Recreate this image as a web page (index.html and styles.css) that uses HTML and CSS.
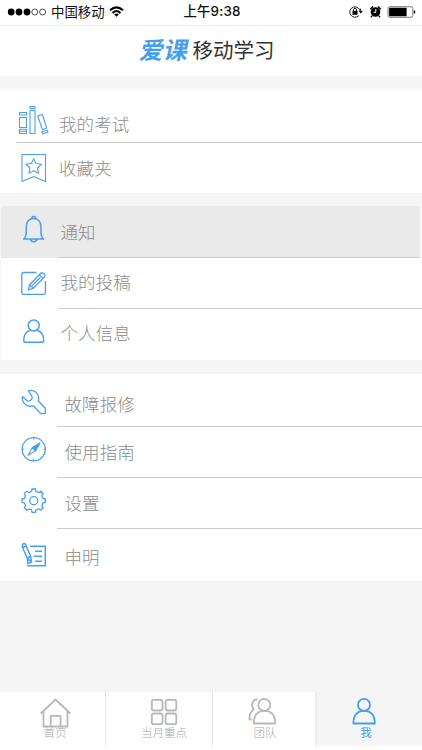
FILE: index.html
```html
<!DOCTYPE html>
<html lang="zh-CN">
<head>
<meta charset="utf-8">
<title>爱课移动学习</title>
<link rel="stylesheet" href="styles.css">
</head>
<body>
<header class="status">
  <div class="carrier">
    <svg width="40" height="24" viewBox="0 0 40 24"><g fill="#000"><circle cx="4.2" cy="12" r="3.4"/><circle cx="12" cy="12" r="3.4"/><circle cx="20" cy="12" r="3.4"/></g><g fill="none" stroke="#222" stroke-width=".8"><circle cx="27.8" cy="12" r="3"/><circle cx="35.6" cy="12" r="3"/></g></svg>
    <span>中国移动</span>
    <svg class="wifi" width="15" height="24" viewBox="0 0 15 24"><g fill="none" stroke="#000" stroke-width="2"><path d="M1 10.2Q7.5 4.6 14 10.2"/><path d="M3.5 12.9Q7.5 9.2 11.500 12.900"/></g><path d="M5.200 14.500Q7.500 12.700 9.800 14.500L7.500 16.700Z"/></svg>
  </div>
  <div class="clock">上午9:38</div>
  <svg class="indicators" width="68" height="24" viewBox="0 0 68 24"><path d="M11.200 12A5.200 5.200 0 1 0 9.800 15.600M11.200 8.500A5.300 5.300 0 0 1 11.500 13" fill="none" stroke="#222" stroke-width="1"/><path d="M9.800 11h4l-2 2.600z"/><rect x="3.500" y="10.800" width="5" height="4"/><path d="M4.500 11V9.800a1.500 1.500 0 0 1 3 0V11" fill="none" stroke="#000" stroke-width=".9"/><circle cx="26.500" cy="12" r="4.800"/><path d="M21.300 9.300l2.700-2.800M31.700 9.300l-2.700-2.800M23 16l-1 1.300M30 16l1 1.300" stroke="#000" stroke-width="1.500"/><path d="M26.800 9v3.300h-2.300" fill="none" stroke="#fff" stroke-width="1"/><rect x="39" y="6.700" width="24.800" height="10.600" rx="1.800" fill="#fff" stroke="#555" stroke-width=".8"/><rect x="40.100" y="7.800" width="17.500" height="8.400" rx=".5"/><path d="M64.800 10q1.600.5 1.600 2t-1.600 2z"/></svg>
</header>
<div class="title"><span class="logo">爱课</span><span class="name">移动学习</span></div>

<main>
  <section class="group exams">
    <a class="row r-exam line-wide"><svg class="icon" viewBox="0 0 32 50"><path d="M1.500 22.500h7V25h-7zM1.500 27.500h7v10h-7zM1.500 39.200h7v4.300h-7zM1.500 41.300h7M12 16.500h5v2h-5zM12 20.500h5v23h-5zM19.700 26l4.600-1.500L28.700 38l-4.200 1.800zM23.800 41.700l5.500-1.400.7 2-5.400 1.400z"/></svg><span class="label">我的考试</span></a>
    <a class="row r-fav"><svg class="icon" viewBox="0 0 32 50"><path d="M4 11.500h23.500v27l-11.800-5L4 38.500z"/><path d="M15.700 15.700l2.400 4.800 5.300.8-3.900 3.700.9 5.200-4.700-2.400-4.700 2.400.9-5.200L8 21.300l5.300-.8z"/></svg><span class="label">收藏夹</span></a>
  </section>

  <section class="group personal">
    <a class="row r-notice active line"><svg class="icon" viewBox="0 0 32 50"><path class="heavy" d="M5.600 33c2.300-1.800 2.700-3.200 2.700-7.500v-5.200c0-4.800 3.200-7.800 7.300-7.800s7.300 3 7.300 7.800v5.200c0 4.300.4 5.700 2.700 7.500zM13.700 12.400c0-2.500 4-2.500 4 0M12.500 33.300c.2 3.300 6.200 3.300 6.400 0"/></svg><span class="label">通知</span></a>
    <a class="row r-post line"><svg class="icon" viewBox="0 0 32 50"><path class="bold" d="M18.500 14.500H5.500Q3.800 14.500 3.800 16.200v18.500q0 1.700 1.700 1.700h20.200q1.700 0 1.700-1.700V23"/><path class="bold" d="M10.300 32l1.300-5.200L22.800 15.200q1.100-1 2.400.1l1.400 1.300q1.100 1.100 0 2.300L15.300 30.300zM11.600 26.800l3.700 3.500M21.300 16.800l3.700 3.600M14 27.900l8.300-8.400"/></svg><span class="label">我的投稿</span></a>
    <a class="row r-info"><svg class="icon" viewBox="0 0 32 50"><circle class="heavy" cx="15.700" cy="16.500" r="5.500"/><path class="heavy" d="M12.200 21.200C8 22.600 5.800 26 5.800 30.800v1.300q0 1.200 1.200 1.200h17.400q1.200 0 1.200-1.200v-1.300c0-4.800-2.200-8.200-6.400-9.600"/></svg><span class="label">个人信息</span></a>
  </section>

  <section class="group support">
    <a class="row r-repair line"><svg class="icon" viewBox="0 0 32 50"><path class="bold" d="M10.300 16.800q4.600-1.300 8 1.800 3.500 3.500 1.800 8.200l7.200 7.500V39.600h-4.500L15.300 31.800q-4.500 1.300-8-1.400Q3.500 27.200 4.400 22.600l4.800 4.100q1.700.9 3.400-.5 2-1.600 1.500-3.700z"/></svg><span class="label">故障报修</span></a>
    <a class="row r-guide line"><svg class="icon" viewBox="0 0 32 50"><circle class="bold" cx="15.700" cy="22.300" r="11.600"/><path d="M21.800 16.200l-4.500 7.700-7.300 4.300 4.200-7.400z"/><path class="solid" d="M21.800 16.200l-4.500 7.700-3.100-3.100z"/><path d="M15.700 10.700v1.800M15.700 32v1.800M4.200 22.300H6M25.500 22.300h1.800"/></svg><span class="label">使用指南</span></a>
    <a class="row r-settings line"><svg class="icon" viewBox="0 0 32 50"><defs><path id="tooth" d="M-2.200-9.200l.5-2.500h3.400l.5 2.500 2.900 1.140"/></defs><g class="bold" transform="translate(15.700 22.700)"><circle r="4"/><use href="#tooth"/><use href="#tooth" transform="rotate(45)"/><use href="#tooth" transform="rotate(90)"/><use href="#tooth" transform="rotate(135)"/><use href="#tooth" transform="rotate(180)"/><use href="#tooth" transform="rotate(225)"/><use href="#tooth" transform="rotate(270)"/><use href="#tooth" transform="rotate(315)"/></g></svg><span class="label">设置</span></a>
    <a class="row r-terms"><svg class="icon" viewBox="0 0 32 50"><path class="heavy" d="M12.300 17.300h15v19.400H9M17 22.300h7M15.500 27.300H24M17 32.300h7"/><path class="heavy" d="M4.500 18.500l3.700-1.500 4.500 10.500-3.500 1.500zM4.500 18.500q-.8-3 1-3.800t2.700 2.300M9.200 29l3.500-1.500.9 5.600zM9.500 29.500l.2 5 4-1.400"/></svg><span class="label">申明</span></a>
  </section>
</main>

<nav class="tabs">
  <a class="tab t-home"><svg viewBox="0 0 105 54"><path d="M40.700 21.500L55.500 7.500l14.800 14M43.500 19.500v15h24v-15M50.700 34.500v-10.700h9.800v10.700"/></svg><span>首页</span></a>
  <a class="tab t-month"><svg viewBox="106 0 106 54"><rect x="151.800" y="7.800" width="10.700" height="10.700" rx="2"/><rect x="165.600" y="7.800" width="10.700" height="10.700" rx="2"/><rect x="151.800" y="21.500" width="10.700" height="10.700" rx="2"/><rect x="165.600" y="21.500" width="10.700" height="10.700" rx="2"/></svg><span>当月重点</span></a>
  <a class="tab t-team"><svg viewBox="213 0 102 54"><circle cx="264.300" cy="12.900" r="6"/><path d="M253.800 31.500q0-12.600 10.700-12.600t10.700 12.600zM257.600 7.300c-6 0-6.600 7-3.800 10.200-3 1.800-4.400 4.700-4.400 9.800l2.300.3"/></svg><span>团队</span></a>
  <a class="tab t-me current"><svg viewBox="317 0 105 54"><circle cx="364" cy="12.900" r="6"/><path d="M353.400 31.500q0-12.600 10.700-12.600t10.700 12.600z"/></svg><span>我</span></a>
</nav>
</body>
</html>
```
FILE: styles.css
```css
* { box-sizing: border-box; }
body {
  margin: 0;
  width: 422px;
  height: 750px;
  overflow: hidden;
  display: flex;
  flex-direction: column;
  background: #fff;
  font-family: "Noto Sans CJK SC", sans-serif;
  color: #8c8c8c;
}
svg { display: block; flex: none; }

.status {
  height: 26px;
  display: grid;
  grid-template-columns: 1fr auto 1fr;
  padding: 0 5px 0 7px;
  border-bottom: 1px solid #ededed;
  color: #111;
  font-size: 13.4px;
  line-height: 23px;
}
.carrier { display: flex; }
.carrier span { margin-left: 4px; }
.wifi { margin-left: 4px; }
.clock {
  font-family: Inter, "Noto Sans CJK SC", sans-serif;
  font-weight: 500;
  font-size: 13.4px;
  letter-spacing: .15px;
}
.indicators { justify-self: end; }

.title {
  height: 50px;
  display: flex;
  justify-content: center;
  align-items: flex-start;
  padding-right: 7px;
  color: #333;
  font-size: 20.5px;
}
.logo {
  color: #459ef0;
  font-weight: 700;
  font-size: 24px;
  line-height: 46px;
  transform: skewX(-12deg);
  margin-right: 4px;
}
.name { line-height: 46px; }

main {
  height: 616px;
  background: #f5f5f5;
  padding-top: 14px;
}
.group { background: #fff; }
.exams { height: 103px; margin-bottom: 13px; }
.personal { height: 154px; margin-bottom: 14px; margin-left: 1px; }
.support { height: 207px; }

.row {
  display: flex;
  align-items: flex-start;
  padding-left: 18px;
  height: 51px;
}
.personal .row { padding-left: 17px; }
.icon {
  width: 32px;
  height: 50px;
  fill: none;
  stroke: #4a9fee;
  stroke-width: 1.1;
  stroke-linejoin: round;
}
.bold { stroke-width: 1.3; }
.heavy { stroke-width: 1.5; }
.solid { fill: #459ef0; }
.label {
  margin-left: 9px;
  font-size: 17.5px;
  font-weight: 300;
  line-height: 20px;
  letter-spacing: .1px;
}
.personal .label { margin-left: 10.5px; }
.support .label { margin-left: 14.5px; }

.line, .line-wide {
  background: linear-gradient(#ccc, #ccc) right bottom / calc(100% - 57px) 1px no-repeat;
}
.line-wide { background-size: calc(100% - 16px) 1px; }
.active {
  background-color: #eaeaea;
  border-right: 2px solid #f8f8f8;
}

.r-exam { height: 53px; }
.r-exam .label { margin-top: 24px; }
.r-fav .label { margin-top: 15px; }
.r-notice { height: 52px; }
.r-notice .label { margin-top: 16px; }
.r-post .label { margin-top: 14px; }
.r-info .label { margin-top: 14px; }
.r-repair { height: 53px; }
.r-repair .label { margin-top: 20px; }
.r-guide .label { margin-top: 15px; }
.r-settings .label { margin-top: 15px; }
.r-terms .label { margin-top: 18px; }

.tabs {
  height: 54px;
  flex: none;
  display: grid;
  grid-template-columns: 106px 107px 104px 105px;
}
.tab {
  display: grid;
  height: 54px;
  border-right: 1px solid #e5e5e5;
  color: #a8a8a8;
  font-size: 11.5px;
  font-weight: 300;
  line-height: 14px;
}
.tab svg {
  grid-area: 1 / 1;
  width: 100%;
  height: 54px;
  fill: none;
  stroke: #b8b8b8;
  stroke-width: 1.8;
  stroke-linejoin: round;
}
.tab span {
  grid-area: 1 / 1;
  justify-self: center;
  align-self: end;
  margin-bottom: 7px;
}
.t-home span { padding-left: 5px; }
.t-month span { padding-left: 10px; }
.t-team { border-right: 2px solid #eee; }
.t-team span { padding-left: 2px; }
.current {
  background: #f5f5f5;
  border: 0;
  color: #459ef0;
  font-weight: 400;
}
.current span { padding-right: 7px; }
.current svg { stroke: #459ef0; }
```
